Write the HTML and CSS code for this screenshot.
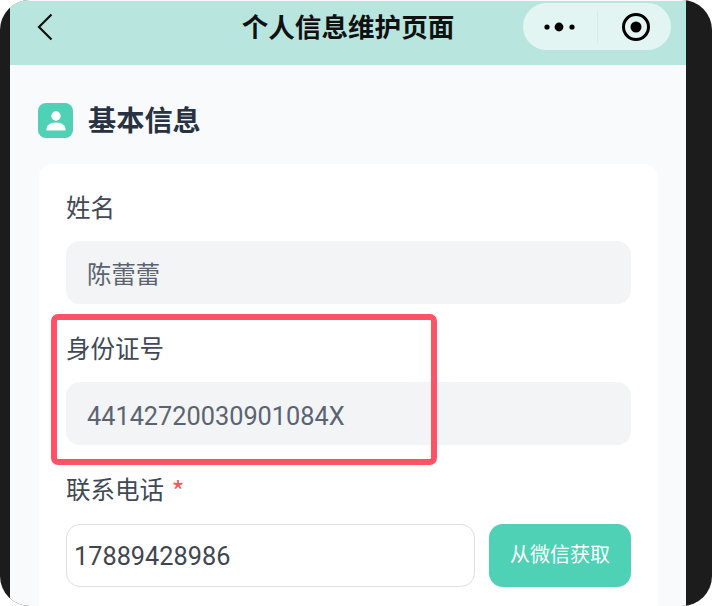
FILE: index.html
```html
<!DOCTYPE html>
<html lang="zh">
<head>
    <meta charset="utf-8">
    <title>个人信息维护页面</title>
    <link rel="stylesheet" href="styles.css">
</head>
<body>
    <div class="frame">
        <div class="screen">
            <div class="navbar">
                <div class="navLeft">
                    <svg class="backIcon" width="18" height="28" viewBox="0 0 18 28"><path d="M15.5 1.5 3 14l12.5 12.500" fill="none" stroke="#111" stroke-width="2.2"/></svg>
                </div>
                <div class="navTitle">个人信息维护页面</div>
                <div class="navRight">
                    <div class="capsule">
                        <svg class="moreIcon" width="32" height="12" viewBox="0 0 32 12"><circle cx="3" cy="6" r="2.6"/><circle cx="15" cy="6" r="4.400"/><circle cx="28" cy="6" r="2.6"/></svg>
                        <div class="capsuleLine"></div>
                        <svg class="closeIcon" width="30" height="30" viewBox="0 0 30 30"><circle cx="15" cy="15" r="12.5" fill="none" stroke="#000" stroke-width="3"/><circle cx="15" cy="15" r="5.5"/></svg>
                    </div>
                </div>
            </div>

            <div class="content">
                <div class="sectionHead">
                    <div class="sectionIcon">
                        <svg width="20" height="22" viewBox="0 0 23 25"><circle cx="11.5" cy="6.8" r="5.400" fill="#fff"/><path d="M1.500 23.500c-.7 0-1-.4-1-1 0-5 3.800-8.300 11-8.300s11 3.300 11 8.300c0 .6-.3 1-1 1z" fill="#fff"/></svg>
                    </div>
                    <div class="sectionTitle">基本信息</div>
                </div>

                <div class="card">
                    <div class="field">
                        <div class="fieldLabel">姓名</div>
                        <div class="fieldValue readonly nameValue">陈蕾蕾</div>
                    </div>
                    <div class="field">
                        <div class="fieldLabel">身份证号</div>
                        <div class="fieldValue readonly">44142720030901084X</div>
                        <div class="highlight"></div>
                    </div>
                    <div class="field">
                        <div class="fieldLabel">联系电话 <span class="required">*</span></div>
                        <div class="phoneRow">
                            <div class="fieldValue editable">17889428986</div>
                            <div class="wxBtn">从微信获取</div>
                        </div>
                    </div>
                </div>
            </div>
        </div>
    </div>
</body>
</html>
```

FILE: styles.css
```css
html,
body {
    margin: 0;
    padding: 0;
    background-color: #fff;
    font-family: "Noto Sans CJK SC", "Noto Sans", sans-serif;
}

.frame {
    width: 712px;
    height: 606px;
    background-color: #1c1c1c;
    border-radius: 30px;
    overflow: hidden;
}

.screen {
    width: 676px;
    height: 606px;
    margin-left: 10px;
    background-color: #f8fafc;
    overflow: hidden;
}

.navbar {
    display: grid;
    grid-template-columns: 1fr auto 1fr;
    align-items: start;
    height: 64px;
    margin-top: 1px;
    background-color: #b8e6de;
}

.navLeft {
    padding: 12px 0 0 26px;
}

.backIcon {
    display: block;
}

.navTitle {
    font-size: 26.6px;
    font-weight: 700;
    line-height: 50px;
    color: #111;
}

.navRight {
    display: flex;
    justify-content: flex-end;
    padding: 2px 15px 0 0;
}

.capsule {
    display: flex;
    align-items: center;
    width: 148px;
    height: 47px;
    border-radius: 24px;
    background-color: #e2f5f2;
}

.moreIcon {
    margin-left: 21px;
}

.capsuleLine {
    width: 1px;
    height: 32px;
    margin-left: 21px;
    background-color: #d5ebe7;
}

.closeIcon {
    margin-left: 23px;
}

.content {
    padding: 38px 28px 0 28px;
}

.sectionHead {
    display: flex;
    align-items: center;
    gap: 15px;
}

.sectionIcon {
    display: flex;
    align-items: center;
    justify-content: center;
    width: 35px;
    height: 35px;
    border-radius: 8px;
    background-color: #4fd1b5;
}

.sectionTitle {
    font-size: 28.2px;
    font-weight: 700;
    line-height: 31px;
    margin-bottom: 4px;
    color: #293241;
}

.card {
    margin: 26px 0 0 1px;
    padding: 27px 27px 30px 27px;
    border-radius: 14px;
    background-color: #fff;
}

.field {
    position: relative;
    margin-bottom: 28px;
}

.fieldLabel {
    margin-bottom: 18px;
    font-size: 24.5px;
    line-height: 32px;
    color: #414955;
}

.required {
    margin-left: 2px;
    color: #ef5a5a;
    font-size: 28px;
    line-height: 20px;
    vertical-align: -3px;
}

.fieldValue {
    box-sizing: border-box;
    height: 63px;
    font-size: 25.3px;
    line-height: 69px;
    border-radius: 14px;
    font-family: Roboto, "Noto Sans CJK SC", sans-serif;
}

.readonly {
    padding-left: 21px;
    background-color: #f3f4f6;
    color: #5c6370;
}

.nameValue {
    font-size: 24.4px;
    line-height: 68px;
}

.editable {
    flex: 1;
    padding-left: 7px;
    line-height: 63px;
    border: 1px solid #dcdfe3;
    color: #3f4650;
}

.phoneRow {
    display: flex;
    gap: 14px;
    margin-top: 19px;
}

.wxBtn {
    width: 142px;
    height: 63px;
    border-radius: 14px;
    background-color: #4fd1b5;
    color: #fff;
    font-size: 20px;
    line-height: 60px;
    text-align: center;
}

.highlight {
    position: absolute;
    left: -15px;
    top: -18px;
    width: 386px;
    height: 151px;
    box-sizing: border-box;
    border: 6px solid #ff5266;
    border-radius: 7px;
}
```
